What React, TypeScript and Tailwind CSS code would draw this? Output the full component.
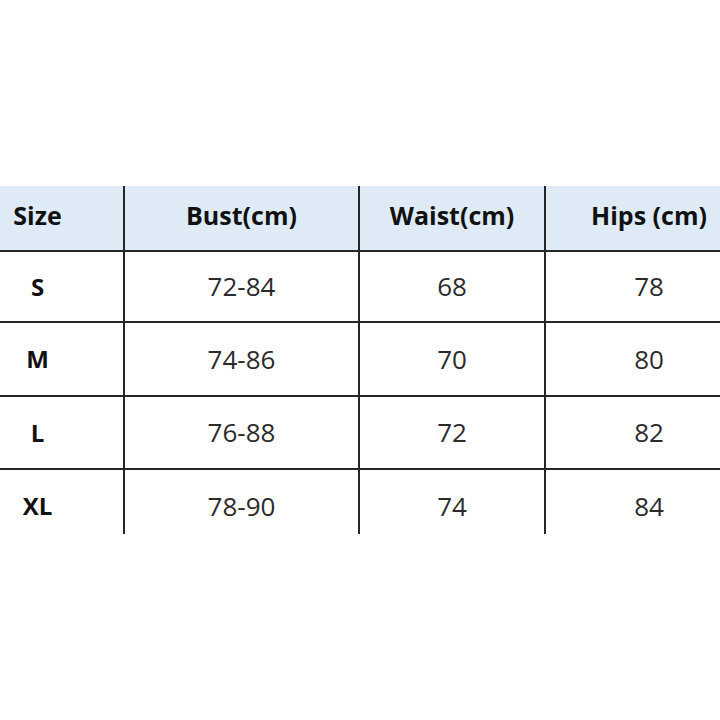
const rows = [
  { size: 'S', bust: '72-84', waist: '68', hips: '78', h: 'h-[71px]', last: false },
  { size: 'M', bust: '74-86', waist: '70', hips: '80', h: 'h-[74px]', last: false },
  { size: 'L', bust: '76-88', waist: '72', hips: '82', h: 'h-[73px]', last: false },
  { size: 'XL', bust: '78-90', waist: '74', hips: '84', h: 'h-[64px]', last: true },
];

export default function App() {
  return (
    <div className="w-[720px] h-[720px] overflow-hidden bg-white font-['Open_Sans',sans-serif]">
      <div className="mt-[186px] ml-[-48px] w-[800px] grid grid-cols-[173px_235px_186px_206px]">
        {/* header */}
        <div className="h-[66px] pb-1 bg-[#deebf7] border-r-2 border-b-2 border-[#262626] flex items-center justify-center text-[25px] font-bold text-[#111]">Size</div>
        <div className="h-[66px] pb-1 bg-[#deebf7] border-r-2 border-b-2 border-[#262626] flex items-center justify-center text-[25px] font-bold text-[#111]">Bust(cm)</div>
        <div className="h-[66px] pb-1 bg-[#deebf7] border-r-2 border-b-2 border-[#262626] flex items-center justify-center text-[25px] font-bold text-[#111]">Waist(cm)</div>
        <div className="h-[66px] pb-1 bg-[#deebf7] border-b-2 border-[#262626] flex items-center justify-center text-[25px] font-bold text-[#111]">Hips (cm)</div>

        {rows.map((r) => {
          const base = r.last
            ? `${r.h} border-[#262626] flex items-center justify-center pt-2`
            : `${r.h} border-[#262626] border-b-2 flex items-center justify-center`;
          return (
            <div key={r.size} className="contents">
              <div className={`${base} border-r-2 text-[24px] font-bold text-[#111]`}>{r.size}</div>
              <div className={`${base} border-r-2 text-[26px] text-[#2b2b2b]`}>{r.bust}</div>
              <div className={`${base} border-r-2 text-[26px] text-[#2b2b2b]`}>{r.waist}</div>
              <div className={`${base} text-[26px] text-[#2b2b2b]`}>{r.hips}</div>
            </div>
          );
        })}
      </div>
    </div>
  );
}
